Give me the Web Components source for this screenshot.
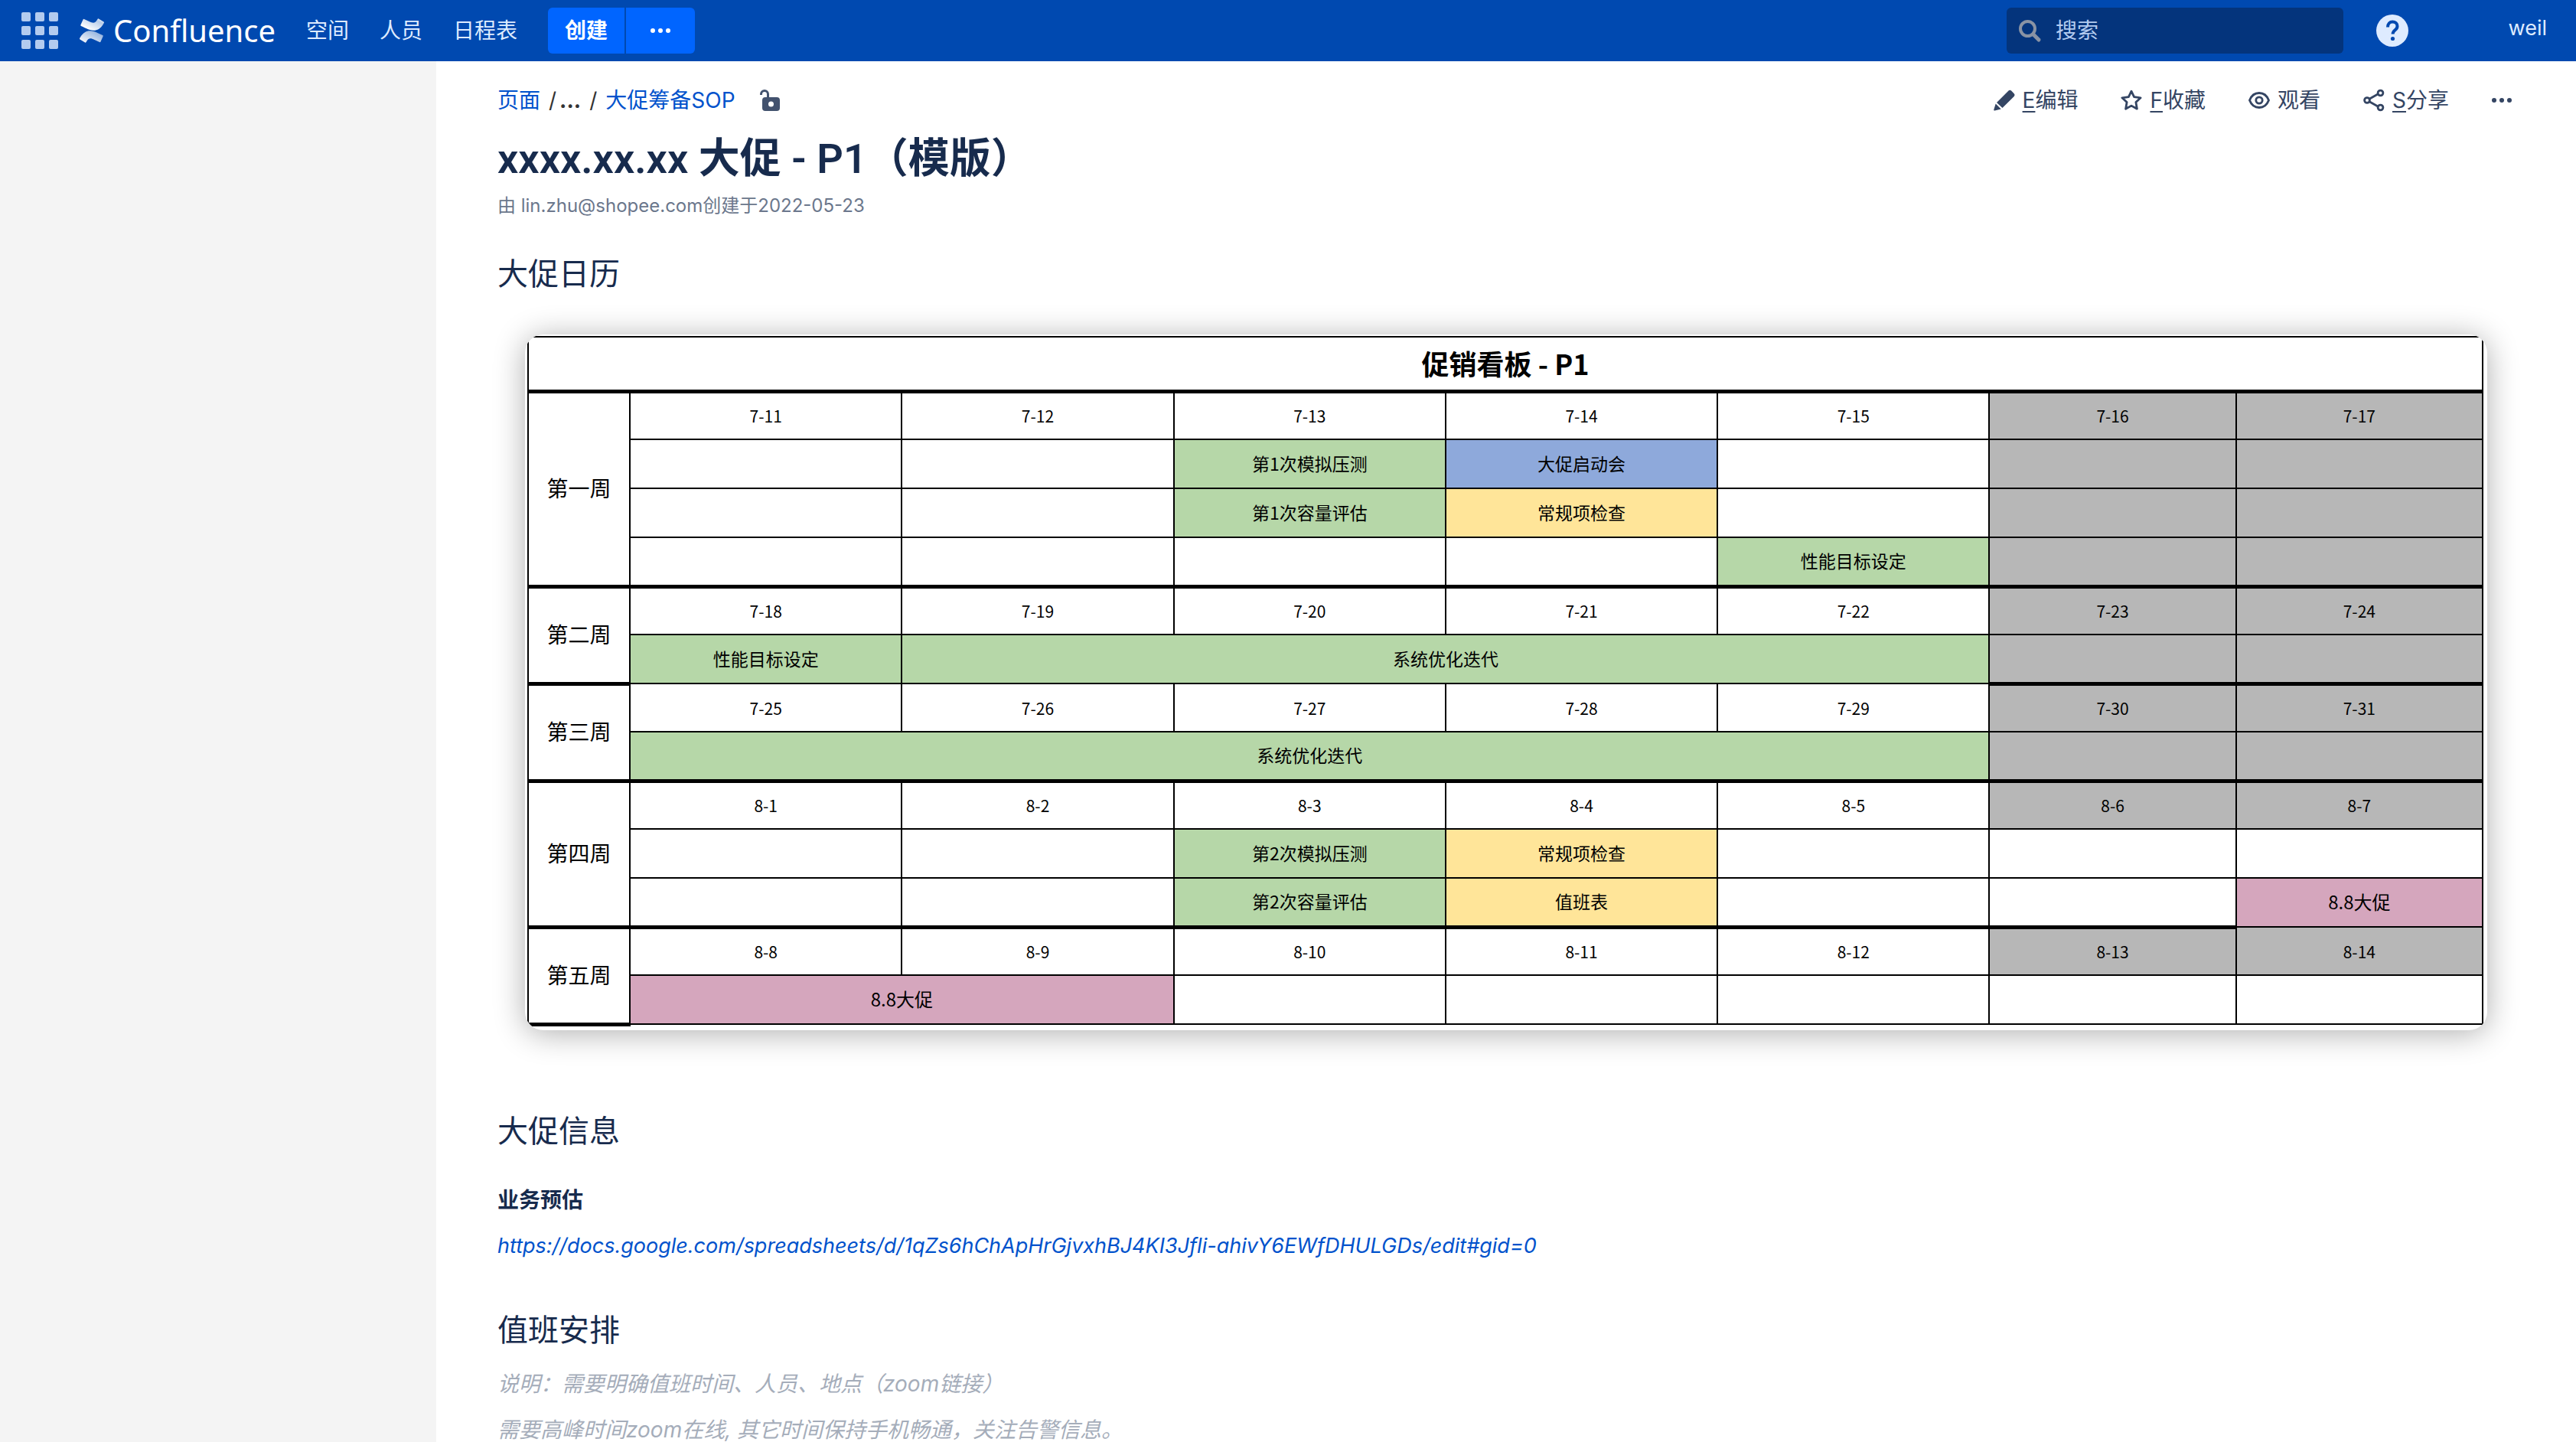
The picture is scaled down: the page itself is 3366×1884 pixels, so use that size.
<!DOCTYPE html>
<html lang="zh-CN">
<head>
<meta charset="utf-8">
<title>xxxx.xx.xx 大促 - P1（模版） - Confluence</title>
<style>
html, body { margin: 0; }
body {
  font-family: Inter, "Noto Sans CJK SC", sans-serif;
  font-size: 28px;
  line-height: 34px;
  color: #172b4d;
  background: #fff;
}
a { color: #0052cc; text-decoration: none; }
h1, h2, h3, p { margin: 0; }
h1 { font-family: Roboto, "Noto Sans CJK SC", sans-serif; font-size: 54px; line-height: 64px; font-weight: 600; margin-top: 24px; }
h2 { font-size: 40px; line-height: 48px; font-weight: 400; }
h3 { font-size: 28px; line-height: 40px; font-weight: 700; margin-top: 46px; }
.byline { font-size: 24px; line-height: 32px; color: #6b778c; margin: 13px 0 49px; }
.doc-link { font-size: 27px; font-style: italic; margin: 23px 0 69px; }
.note { font-style: italic; line-height: 24px; color: #a5adba; margin-top: 36px; }
h2 + .note { margin-top: 34px; }
promo-calendar { margin: 55px 36px 108px; }
</style>
</head>
<body>
<wiki-page>
  <wiki-header slot="header"></wiki-header>
  <page-toolbar></page-toolbar>
  <h1>xxxx.xx.xx 大促 - P1（模版）</h1>
  <p class="byline">由 lin.zhu@shopee.com创建于2022-05-23</p>
  <h2>大促日历</h2>
  <promo-calendar></promo-calendar>
  <h2>大促信息</h2>
  <h3>业务预估</h3>
  <p class="doc-link"><a href="https://docs.google.com/spreadsheets/d/1qZs6hChApHrGjvxhBJ4KI3Jfli-ahivY6EWfDHULGDs/edit#gid=0">https://docs.google.com/spreadsheets/d/1qZs6hChApHrGjvxhBJ4KI3Jfli-ahivY6EWfDHULGDs/edit#gid=0</a></p>
  <h2>值班安排</h2>
  <p class="note">说明：需要明确值班时间、人员、地点（zoom链接）</p>
  <p class="note">需要高峰时间zoom在线, 其它时间保持手机畅通，关注告警信息。</p>
</wiki-page>

<script>
class ShadowElement extends HTMLElement {
  constructor() {
    super();
    this.attachShadow({ mode: 'open' }).innerHTML = this.template();
  }
}

/* Page frame: header above a side column and the content column */
class WikiPage extends ShadowElement {
  template() {
    return `
      <style>
        :host { display: flex; flex-direction: column; min-height: 100vh; }
        .body { display: flex; flex: 1; }
        aside { width: 570px; flex: none; background: #f4f4f4; }
        main { flex: 1; min-width: 0; padding: 30px 80px 0; }
      </style>
      <slot name="header"></slot>
      <div class="body"><aside></aside><main><slot></slot></main></div>`;
  }
}
customElements.define('wiki-page', WikiPage);

class UiIcon extends HTMLElement {
  static shapes = {
    apps: '<g fill="currentColor">' + [0, 18, 36].map(y => [0, 18, 36].map(x => `<rect x="${x}" y="${y}" width="12" height="12" rx="2"/>`).join('')).join('') + '</g>',
    confluence: `<defs>
        <linearGradient id="a" x1="1" y1="0" x2=".2" y2=".8"><stop offset="0" stop-color="#fff"/><stop offset=".3" stop-color="#fff" stop-opacity=".72"/><stop offset="1" stop-color="#fff"/></linearGradient>
        <linearGradient id="b" x1="0" y1="1" x2=".8" y2=".2"><stop offset="0" stop-color="#fff"/><stop offset="1" stop-color="#fff" stop-opacity=".6"/></linearGradient>
      </defs>
      <path fill="url(#b)" d="M.87 18.257c-.248.382-.53.875-.763 1.245a.764.764 0 0 0 .255 1.04l4.965 3.054a.764.764 0 0 0 1.058-.26c.199-.332.454-.763.733-1.221 1.967-3.247 3.945-2.853 7.508-1.146l4.957 2.337a.764.764 0 0 0 1.028-.382l2.364-5.346a.764.764 0 0 0-.382-1 599.851 599.851 0 0 1-4.965-2.361C10.911 10.97 5.224 11.185.87 18.257z"/>
      <path fill="url(#a)" d="M23.131 5.743c.249-.405.531-.875.764-1.25a.764.764 0 0 0-.256-1.034L18.675.404a.764.764 0 0 0-1.058.26c-.195.335-.451.763-.734 1.225-1.966 3.246-3.945 2.85-7.508 1.146L4.437.694a.764.764 0 0 0-1.027.382L1.046 6.422a.764.764 0 0 0 .382 1c1.039.49 3.105 1.467 4.965 2.361 6.698 3.246 12.392 3.029 16.738-4.04z"/>`,
    search: '<g fill="none" stroke="currentColor"><circle cx="11.5" cy="11.5" r="9.5" stroke-width="4"/><path d="M19 19l7 7" stroke-width="5" stroke-linecap="round"/></g>',
    help: '<circle cx="21" cy="21" r="21" fill="currentColor"/><path d="M15 16.5c0-4.500 2.700-7 6.300-7 3.500 0 6.200 2.300 6.200 5.700 0 2.500-1.300 3.900-3 5.200-1.900 1.500-2.900 2.400-2.900 5.200" fill="none" stroke="#0049b0" stroke-width="4"/><circle cx="21.500" cy="31.500" r="2.600" fill="#0049b0"/>',
    dots: '<g fill="currentColor"><circle cx="3" cy="14" r="3"/><circle cx="13" cy="14" r="3"/><circle cx="23" cy="14" r="3"/></g>',
    lock: '<path fill="none" stroke="currentColor" stroke-width="3" d="M1.500 7V6a4.500 4.500 0 0 1 9 0v6"/><path fill="currentColor" fill-rule="evenodd" d="M7 10h15a4 4 0 0 1 4 4v10a4 4 0 0 1-4 4H7a4 4 0 0 1-4-4V14a4 4 0 0 1 4-4zm7.500 5.500a3.500 3.500 0 1 0 0 7 3.500 3.500 0 0 0 0-7z"/>',
    pencil: '<path fill="currentColor" d="M19.500 1.600a2.600 2.600 0 0 1 3.600 0l3.600 3.600a2.600 2.600 0 0 1 0 3.700L11.500 24 4 16.900z"/><path fill="currentColor" d="M2.700 18.600l7 6.800L1.500 27.500a1 1 0 0 1-1.200-1.300z"/>',
    star: '<path fill="none" stroke="currentColor" stroke-width="2.800" stroke-linejoin="round" d="M14 2.200l3.600 7.500 8.500 1.100-6.200 5.700 1.500 8.700-7.400-4.100-7.400 4.100 1.500-8.700L1.900 10.800l8.500-1.100z"/>',
    eye: '<g fill="none" stroke="currentColor" stroke-width="2.800"><path d="M14 4.500c5.800 0 10.200 3.500 12.500 9.500-2.300 6-6.700 9.500-12.500 9.500S3.800 20 1.500 14C3.800 8 8.200 4.500 14 4.500z"/><circle cx="14" cy="14" r="4.200"/></g>',
    share: '<g fill="none" stroke="currentColor" stroke-width="2.800"><path d="M8 12.300l11.500-6.500M8 15.700l11.500 6.500"/><circle cx="5" cy="14" r="3.400"/><circle cx="22.500" cy="4.500" r="3.400"/><circle cx="22.500" cy="23.500" r="3.400"/></g>'
  };
  static boxes = { apps: [48, 48, 48], confluence: [24, 24, 32], help: [42, 42, 42], dots: [26, 28, 26], lock: [26, 28, 26] };
  constructor() {
    super();
    const name = this.getAttribute('name');
    const [w, h, size] = UiIcon.boxes[name] || [28, 28, 28];
    this.attachShadow({ mode: 'open' }).innerHTML = `
      <style>:host { display: inline-flex; flex: none; } svg { display: block; width: ${size}px; overflow: visible; }</style>
      <svg viewBox="0 0 ${w} ${h}" aria-hidden="true">${UiIcon.shapes[name]}</svg>`;
  }
}
customElements.define('ui-icon', UiIcon);

class WikiHeader extends ShadowElement {
  template() {
    return `
      <style>
        :host {
          display: flex; align-items: center; height: 80px; box-sizing: border-box;
          padding: 0 38px 0 28px; background: #0049b0; color: #deebff;
        }
        a { color: inherit; text-decoration: none; white-space: nowrap; }
        button { font: inherit; border: 0; margin: 0; padding: 0; background: none; color: inherit; }
        .apps { display: flex; color: #b3cbef; }
        .brand {
          display: flex; align-items: center; gap: 12px; margin-left: 28px;
          font-family: "Noto Sans", sans-serif; font-size: 40px; line-height: 60px; color: #fff;
        }
        nav { display: flex; gap: 40px; margin-left: 40px; }
        .create { display: flex; gap: 2px; height: 60px; margin-left: 40px; }
        .create button { background: #0065ff; color: #fff; display: flex; align-items: center; justify-content: center; }
        .create button:first-child { width: 100px; border-radius: 6px 0 0 6px; font-weight: 700; }
        .create button:last-child { width: 90px; border-radius: 0 6px 6px 0; }
        .search {
          display: flex; align-items: center; gap: 20px; box-sizing: border-box;
          width: 440px; height: 60px; margin-left: auto; padding: 0 16px;
          border-radius: 6px; background: #04347c; color: #8993a4;
        }
        input { flex: 1; min-width: 0; border: 0; padding: 0; background: none; outline: 0; font: inherit; color: #deebff; }
        input::placeholder { color: #b3cbef; opacity: 1; }
        .help { display: flex; margin-left: 43px; }
        .user { display: flex; justify-content: flex-end; width: 50px; margin-left: 131px; padding-bottom: 6px; font-size: 27px; }
      </style>
      <button class="apps" aria-label="应用"><ui-icon name="apps"></ui-icon></button>
      <a class="brand" href="#home"><ui-icon name="confluence"></ui-icon>Confluence</a>
      <nav><a href="#spaces">空间</a><a href="#people">人员</a><a href="#calendars">日程表</a></nav>
      <div class="create"><button>创建</button><button aria-label="更多"><ui-icon name="dots"></ui-icon></button></div>
      <label class="search"><ui-icon name="search"></ui-icon><input type="text" placeholder="搜索" aria-label="搜索"></label>
      <button class="help" aria-label="帮助"><ui-icon name="help"></ui-icon></button>
      <a class="user" href="#me">weil</a>`;
  }
}
customElements.define('wiki-header', WikiHeader);

class PageAction extends ShadowElement {
  template() {
    const icon = this.getAttribute('icon');
    const key = this.getAttribute('key');
    return `
      <style>
        :host { display: block; }
        button { display: flex; align-items: center; gap: 10px; border: 0; padding: 0; background: none; font: inherit; color: #344563; }
        u { text-underline-offset: 4px; text-decoration-thickness: 2px; }
      </style>
      <button><ui-icon name="${icon}"></ui-icon><span>${key ? `<u>${key}</u>` : ''}<slot></slot></span></button>`;
  }
}
customElements.define('page-action', PageAction);

class PageToolbar extends ShadowElement {
  template() {
    return `
      <style>
        :host { display: flex; align-items: center; justify-content: space-between; height: 42px; }
        nav { display: flex; align-items: center; color: #333; }
        a { color: #0052cc; text-decoration: none; }
        .sep { margin: 0 11px; }
        .sep.tight { margin-right: 4px; }
        b { font-weight: 700; }
        ui-icon { margin-left: 32px; color: #42526e; }
        .actions { display: flex; align-items: center; gap: 56px; padding-right: 4px; }
        .more { border: 0; background: none; padding: 0; display: flex; color: #344563; }
        .more ui-icon { margin: 0; color: inherit; }
      </style>
      <nav>
        <a href="#pages">页面</a><span class="sep tight">/</span><b>...</b><span class="sep">/</span><a href="#sop">大促筹备SOP</a>
        <ui-icon name="lock"></ui-icon>
      </nav>
      <div class="actions">
        <page-action icon="pencil" key="E">编辑</page-action>
        <page-action icon="star" key="F">收藏</page-action>
        <page-action icon="eye">观看</page-action>
        <page-action icon="share" key="S">分享</page-action>
        <button class="more" aria-label="更多操作"><ui-icon name="dots"></ui-icon></button>
      </div>`;
  }
}
customElements.define('page-toolbar', PageToolbar);

/* Board of the campaign weeks. Each cell is [text, classes, colspan]. */
class PromoCalendar extends ShadowElement {
  static weeks = [
    ['第一周', ['7-11', '7-12', '7-13', '7-14', '7-15', ['7-16', 'off'], ['7-17', 'off']], [
      ['', '', ['第1次模拟压测', 'green'], ['大促启动会', 'blue'], '', ['', 'off'], ['', 'off']],
      ['', '', ['第1次容量评估', 'green'], ['常规项检查', 'yellow'], '', ['', 'off'], ['', 'off']],
      ['', '', '', '', ['性能目标设定', 'green'], ['', 'off'], ['', 'off']]]],
    ['第二周', ['7-18', '7-19', '7-20', '7-21', '7-22', ['7-23', 'off'], ['7-24', 'off']], [
      [['性能目标设定', 'green'], ['系统优化迭代', 'green', 4], ['', 'off'], ['', 'off']]]],
    ['第三周', [['7-25', 'thin'], ['7-26', 'thin'], ['7-27', 'thin'], ['7-28', 'thin'], ['7-29', 'thin'], ['7-30', 'off'], ['7-31', 'off']], [
      [['系统优化迭代', 'green', 5], ['', 'off'], ['', 'off']]]],
    ['第四周', ['8-1', '8-2', '8-3', '8-4', '8-5', ['8-6', 'off'], ['8-7', 'off']], [
      ['', '', ['第2次模拟压测', 'green'], ['常规项检查', 'yellow'], '', '', ''],
      ['', '', ['第2次容量评估', 'green'], ['值班表', 'yellow'], '', '', ['8.8大促', 'pink']]]],
    ['第五周', ['8-8', '8-9', '8-10', '8-11', '8-12', ['8-13', 'off'], ['8-14', 'off thin']], [
      [['8.8大促', 'pink', 2], '', '', '', '', '']]]
  ];
  cell(data) {
    const [text, cls = '', span = 1] = Array.isArray(data) ? data : [data];
    return `<td class="${cls}" colspan="${span}">${text}</td>`;
  }
  template() {
    const weeks = PromoCalendar.weeks.map(([name, dates, rows]) => `
      <tbody>
        <tr class="dates"><th scope="rowgroup" rowspan="${rows.length + 1}">${name}</th>${dates.map(this.cell).join('')}</tr>
        ${rows.map(r => `<tr>${r.map(this.cell).join('')}</tr>`).join('')}
      </tbody>`).join('');
    return `
      <style>
        :host {
          display: block; padding: 2px 5px 5px 3px; overflow: hidden; background: #fff;
          border-radius: 24px; box-shadow: 0 4px 40px rgba(0, 0, 0, .32);
          font-family: "Noto Sans CJK SC", sans-serif; color: #000;
        }
        table { width: 100%; border-collapse: collapse; table-layout: fixed; }
        .week { width: 133px; }
        .day { width: 355px; }
        .rest { width: 322px; }
        th, td { border: 2px solid #000; padding: 0 0 2px; text-align: center; vertical-align: middle; }
        td { font-size: 23px; line-height: 32px; }
        th { font-size: 28px; line-height: 36px; font-weight: 400; padding-bottom: 4px; }
        tr { height: 64px; }
        .title { height: 71px; }
        .title th { font-size: 36px; line-height: 48px; font-weight: 700; padding-bottom: 2px; }
        .dates { height: 63px; }
        .dates td { font-size: 21px; padding: 0; }
        .dates th, .dates td:not(.thin) { border-top-width: 5px; }
        tbody:last-child th { border-bottom-width: 5px; }
        .off { background: #b7b7b7; }
        .green { background: #b6d7a8; }
        .blue { background: #8ea9db; }
        .yellow { background: #ffe599; }
        .pink { background: #d5a6bd; font-size: 24px; }
      </style>
      <table>
        <colgroup><col class="week"><col class="day" span="5"><col class="rest" span="2"></colgroup>
        <thead><tr class="title"><th colspan="8">促销看板 - P1</th></tr></thead>
        ${weeks}
      </table>`;
  }
}
customElements.define('promo-calendar', PromoCalendar);
</script>
</body>
</html>
